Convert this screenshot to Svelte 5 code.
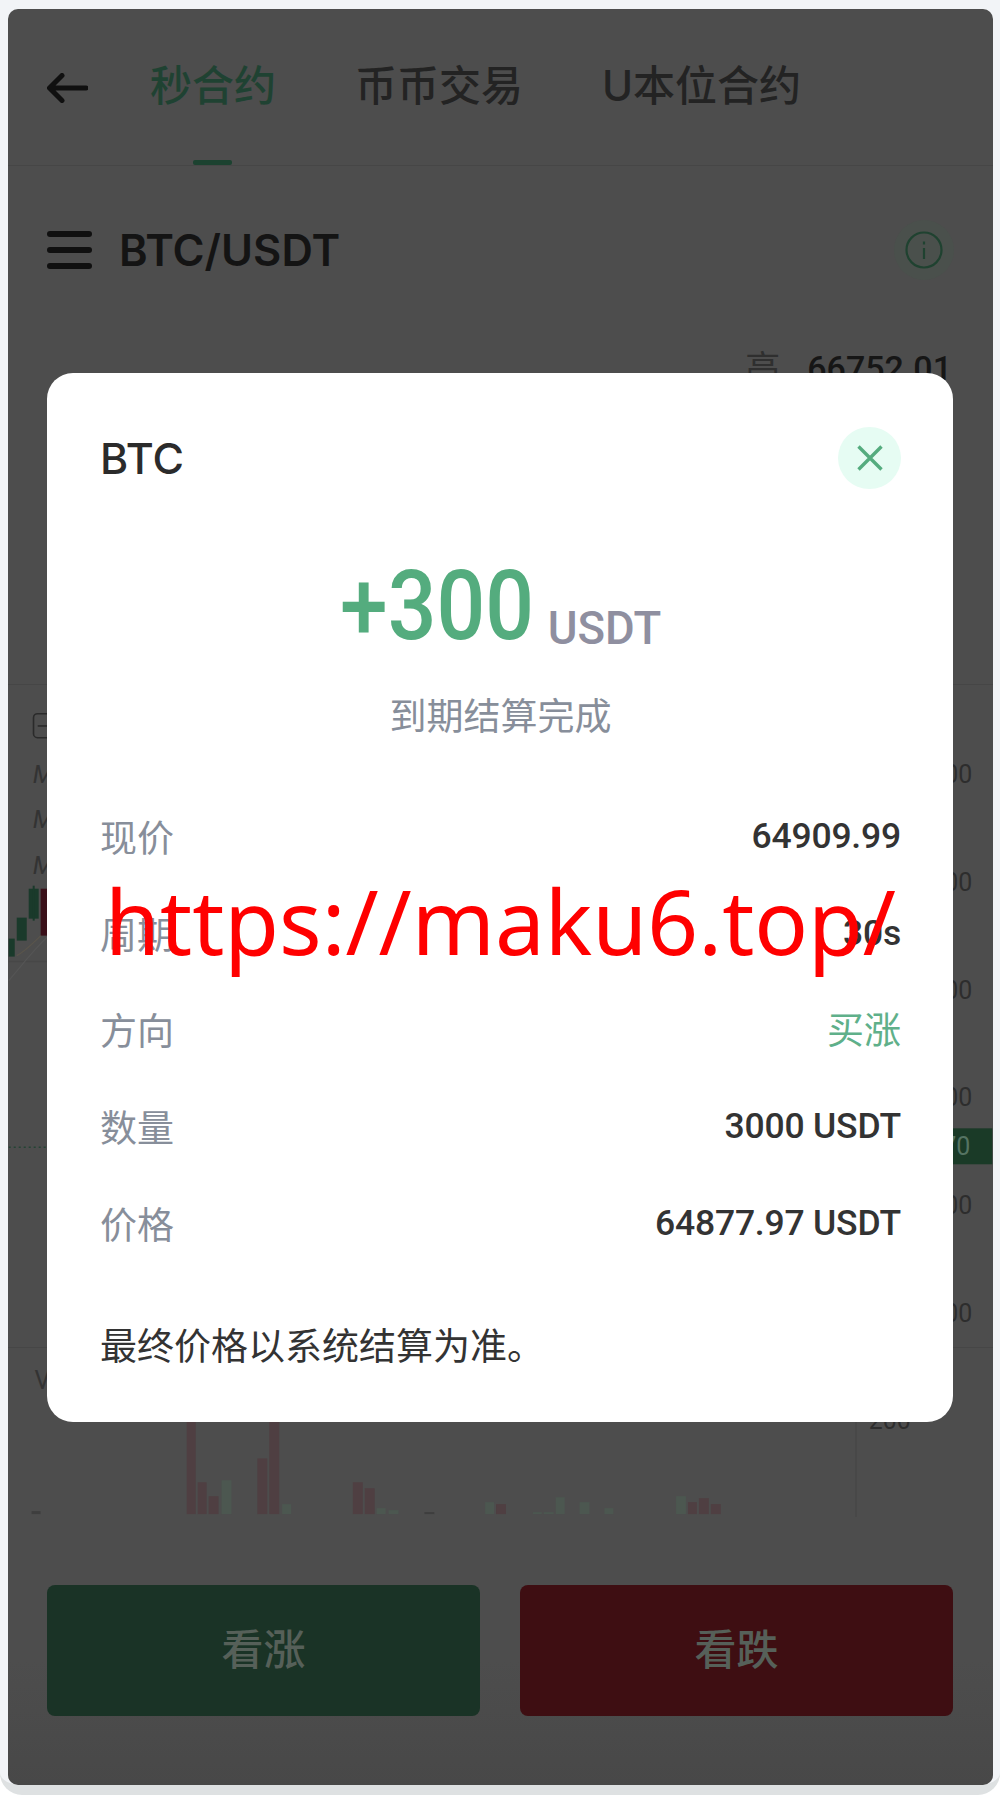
<script>
  const tabs = ['秒合约', '币币交易', 'U本位合约']
  const activeTab = tabs[0]

  const rows = [
    { label: '现价', value: '64909.99' },
    { label: '周期', value: '30s' },
    { label: '方向', value: '买涨', up: true },
    { label: '数量', value: '3000 USDT' },
    { label: '价格', value: '64877.97 USDT' }
  ]

  const axis = [
    { y: 782, text: '66000' },
    { y: 890, text: '65800' },
    { y: 998, text: '65600' },
    { y: 1106, text: '65400' },
    { y: 1214, text: '65200' },
    { y: 1322, text: '65000' }
  ]

  const candles = [
    { x: 8, w: 6, y: 938, h: 18, up: true },
    { x: 16, w: 10, y: 917, h: 23, up: true },
    { x: 28, w: 10, y: 888, h: 30, up: true },
    { x: 40, w: 8, y: 888, h: 47, up: false }
  ]

  // x, width, top of each volume bar, base line at y 1514
  const bars = [
    [29, 9, 1511, 'n'], [185, 9, 1380, 'r'], [196, 9, 1482, 'r'], [207, 10, 1496, 'r'],
    [220, 10, 1480, 'g'], [256, 10, 1458, 'r'], [268, 10, 1380, 'r'], [281, 9, 1504, 'g'],
    [352, 10, 1482, 'r'], [364, 10, 1488, 'r'], [376, 9, 1508, 'g'], [388, 10, 1510, 'g'],
    [424, 10, 1512, 'n'], [485, 9, 1502, 'g'], [496, 10, 1504, 'r'], [533, 9, 1512, 'g'],
    [544, 10, 1512, 'g'], [556, 9, 1497, 'g'], [580, 10, 1502, 'g'], [605, 9, 1508, 'g'],
    [677, 10, 1496, 'g'], [689, 9, 1502, 'r'], [700, 10, 1498, 'r'], [712, 10, 1504, 'r']
  ]
</script>

<div class="page">
  <section class="screen">
    <nav class="nav">
      <svg class="back" width="41" height="30" viewBox="0 0 41 30">
        <path d="M39 15H3M15 2.5L2.5 15 15 27.5" fill="none" stroke="#101010" stroke-width="5" stroke-linecap="round" stroke-linejoin="round"/>
      </svg>
      <div class="tabs">
        {#each tabs as tab}
          <span class="tab" class:active={activeTab == tab}>{tab}</span>
        {/each}
      </div>
    </nav>

    <div class="symbol">
      <div class="burger"><i></i><i></i><i></i></div>
      <span class="pair">BTC/USDT</span>
      <div class="info">
        <svg width="38" height="38" viewBox="0 0 38 38" fill="none" stroke="#1f4230" stroke-width="2.2">
          <circle cx="19" cy="19" r="17.5"/>
          <path d="M19 17v11M19 10.5v3"/>
        </svg>
      </div>
    </div>

    <div class="stats">
      <span class="stat-label">高</span>
      <span class="stat-value">66752.01</span>
    </div>

    <svg class="chart" width="985" height="663" viewBox="8 684 985 663">
      <rect x="32.8" y="712.8" width="25" height="24" rx="4" class="toggle"/>
      <path d="M37 725h16" class="toggle"/>
      <text x="32" y="782" class="ma">MA5</text>
      <text x="32" y="827" class="ma">MA10</text>
      <text x="32" y="873" class="ma">MA30</text>
      <path d="M8 961H48" class="grid"/>
      <path d="M8 980C20 966 32 950 48 935" class="avg"/>
      <path d="M16 955C26 950 34 940 48 928" class="avg warm"/>
      {#each candles as c}
        <rect x={c.x} y={c.y} width={c.w} height={c.h} class={c.up ? 'up' : 'down'}/>
      {/each}
      <path d="M33 885v35" class="wick-up"/>
      <path d="M8 1147H960" class="price"/>
      <rect x="850" y="1128" width="143" height="36" class="tag"/>
      {#each axis as a}
        <text x="973" y={a.y} text-anchor="end" class="axis">{a.text}</text>
      {/each}
      <text x="971" y="1155" text-anchor="end" class="axis tag-text">64870</text>
    </svg>

    <svg class="volume" width="985" height="183" viewBox="8 1347 985 183">
      <text x="32" y="1388" class="ma plain">VOL</text>
      <path d="M858 1347V1517" class="grid"/>
      <text x="913" y="1428" text-anchor="end" class="axis">200</text>
      {#each bars as [x, w, top, kind]}
        <rect {x} y={top} width={w} height={1514 - top} class="bar {kind}"/>
      {/each}
    </svg>

    <div class="actions">
      <button class="buy">看涨</button>
      <button class="sell">看跌</button>
    </div>

    <div class="modal">
      <header class="modal-head">
        <span class="coin">BTC</span>
        <span class="close">
          <svg width="26" height="26" viewBox="0 0 26 26">
            <path d="M1.5 1.5l23 23M24.5 1.5l-23 23" stroke="#54ac7e" stroke-width="3.4" fill="none"/>
          </svg>
        </span>
      </header>

      <div class="result">
        <span class="amount">+300</span>
        <span class="unit">USDT</span>
      </div>
      <p class="status">到期结算完成</p>

      <div class="rows">
        {#each rows as row}
          <div class="row">
            <span class="label">{row.label}</span>
            <span class="value" class:up={row.up}>{row.value}</span>
          </div>
        {/each}
      </div>

      <p class="note">最终价格以系统结算为准。</p>
    </div>

    <div class="stamp">https://maku6.top/</div>
  </section>
</div>

<style>
  :global(body) {
    background: #fff;
  }

  .page {
    box-sizing: border-box;
    height: 1795px;
    padding: 9px 7px 0 8px;
    background: #f2f4f7;
    border-bottom: 10px solid #dee1e2;
    border-radius: 0 0 22px 22px;
    font-family: Inter, "Noto Sans CJK SC", sans-serif;
  }

  .screen {
    position: relative;
    height: 1776px;
    border-radius: 10px;
    overflow: hidden;
    background: linear-gradient(#4d4d4d 93%, #484848);
  }

  .nav {
    display: flex;
    align-items: stretch;
    height: 156px;
    padding-left: 39px;
    border-bottom: 1px solid #464646;
  }

  .back {
    align-self: center;
    margin: 0 62px 0 0;
    transform: translateY(1px);
  }

  .tabs {
    display: flex;
    gap: 79px;
  }

  .tab {
    position: relative;
    display: flex;
    align-items: center;
    padding-bottom: 10px;
    font-size: 42px;
    font-weight: 500;
    color: #232323;
    white-space: nowrap;
  }

  .tab.active {
    color: #1f4232;
  }

  .tab.active::after {
    content: '';
    position: absolute;
    left: 43px;
    bottom: 0;
    width: 39px;
    height: 5px;
    border-radius: 2px;
    background: #1c4230;
  }

  .symbol {
    display: flex;
    align-items: center;
    height: 168px;
    padding: 0 39px 0 39px;
  }

  .burger {
    display: flex;
    flex-direction: column;
    gap: 10px;
    width: 45px;
  }

  .burger i {
    display: block;
    height: 6px;
    border-radius: 3px;
    background: #101010;
  }

  .pair {
    margin-left: 27px;
    font-size: 43.5px;
    font-weight: 600;
    color: #141414;
  }

  .info {
    display: flex;
    align-items: center;
    justify-content: center;
    width: 60px;
    height: 60px;
    margin-left: auto;
    border-radius: 50%;
    background: #4a504c;
  }

  .stats {
    display: flex;
    justify-content: flex-end;
    align-items: flex-start;
    gap: 27px;
    box-sizing: border-box;
    height: 350px;
    padding: 12px 41px 0 0;
  }

  .stat-label {
    font-size: 35px;
    line-height: 44px;
    color: #2f2f2f;
  }

  .stat-value {
    font-family: Roboto, sans-serif;
    font-size: 34px;
    line-height: 44px;
    font-weight: 500;
    color: #161616;
  }

  .chart,
  .volume {
    display: block;
    border-top: 1px solid #464646;
    box-sizing: border-box;
  }

  .toggle {
    fill: none;
    stroke: #2a2a2a;
    stroke-width: 1.6;
  }

  .ma {
    font-family: Roboto, sans-serif;
    font-size: 25px;
    font-style: italic;
    fill: #333;
  }

  .ma.plain {
    font-style: normal;
  }

  .grid {
    fill: none;
    stroke: #474747;
    stroke-width: 1.5;
  }

  .avg {
    fill: none;
    stroke: #555;
    stroke-width: 1.2;
  }

  .avg.warm {
    stroke: #5a554b;
  }

  .up {
    fill: #1a3a2b;
  }

  .down {
    fill: #3a1019;
  }

  .wick-up {
    stroke: #1a3a2b;
    stroke-width: 2;
  }

  .price {
    stroke: #244434;
    stroke-width: 1.5;
    stroke-dasharray: 2 3;
  }

  .tag {
    fill: #1a3a27;
  }

  .axis {
    font-family: Roboto, sans-serif;
    font-size: 25px;
    fill: #2d2d2d;
  }

  .tag-text {
    fill: #557362;
  }

  .bar.r {
    fill: #4f3f42;
  }

  .bar.g {
    fill: #4c5750;
  }

  .bar.n {
    fill: #3e3e3e;
  }

  .actions {
    display: grid;
    grid-template-columns: 1fr 1fr;
    gap: 40px;
    margin-top: 55px;
    padding: 0 40px 0 39px;
  }

  .actions button {
    height: 131px;
    padding: 0 0 9px;
    border: none;
    border-radius: 8px;
    font-family: inherit;
    font-size: 42px;
    font-weight: 500;
    color: #566059;
  }

  .buy {
    background: #1a3326;
  }

  .sell {
    background: #3e0e12;
  }

  /* dialog sits over the dimmed page */
  .modal {
    position: absolute;
    left: 39px;
    top: 364px;
    box-sizing: border-box;
    width: 906px;
    height: 1049px;
    padding: 54px 52px 0 53px;
    border-radius: 26px;
    background: #fff;
  }

  .modal-head {
    display: flex;
    align-items: center;
    justify-content: space-between;
    height: 62px;
  }

  .coin {
    font-size: 43px;
    font-weight: 500;
    color: #2b2b2b;
  }

  .close {
    display: flex;
    align-items: center;
    justify-content: center;
    width: 63px;
    height: 62px;
    border-radius: 50%;
    background: #e6fcf3;
  }

  .result {
    display: flex;
    justify-content: center;
    align-items: flex-end;
    gap: 18px;
    height: 100px;
    margin-top: 67px;
  }

  .amount {
    display: inline-block;
    width: 190px;
    font-family: Roboto, sans-serif;
    font-size: 97px;
    line-height: 100px;
    font-weight: 500;
    color: #54ac7e;
    transform: scaleX(0.885);
    transform-origin: left;
  }

  .unit {
    margin-bottom: 5px;
    font-family: Roboto, sans-serif;
    font-size: 45.5px;
    line-height: 45px;
    font-weight: 500;
    color: #8f8fa0;
  }

  .status {
    margin: 36px 0 0;
    font-size: 37px;
    line-height: 50px;
    text-align: center;
    color: #878e9a;
  }

  .rows {
    margin-top: 45.5px;
  }

  .row {
    display: flex;
    align-items: center;
    justify-content: space-between;
    height: 96.7px;
  }

  .label {
    font-size: 37px;
    color: #878e9a;
  }

  .value {
    margin-top: 1px;
    font-family: Roboto, "Noto Sans CJK SC", sans-serif;
    font-size: 35.5px;
    font-weight: 500;
    letter-spacing: -0.2px;
    color: #333;
  }

  .value.up {
    margin: 0 0 2px;
    font-size: 37px;
    font-weight: 400;
    letter-spacing: 0;
    color: #5fb08a;
  }

  .note {
    margin: 51px 0 0;
    font-size: 37px;
    line-height: 50px;
    color: #333;
  }

  /* red web address stamped across the dialog */
  .stamp {
    position: absolute;
    left: 97px;
    top: 857px;
    font-family: "Noto Sans", sans-serif;
    font-size: 89px;
    line-height: 110px;
    color: #ff0000;
    white-space: nowrap;
  }
</style>
